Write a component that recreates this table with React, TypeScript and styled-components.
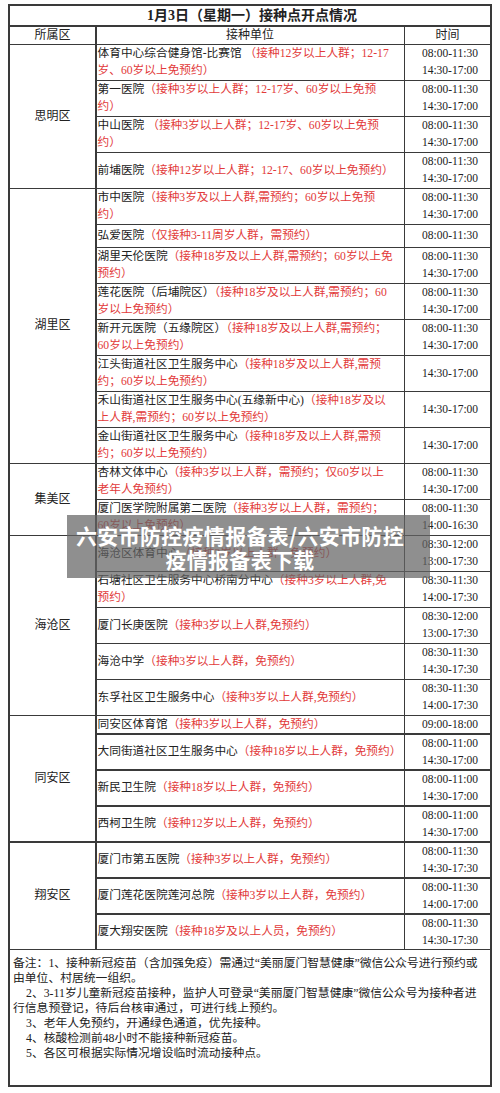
import React from "react";
import styled, { createGlobalStyle } from "styled-components";

const GlobalStyle = createGlobalStyle`
  html, body {
    margin: 0;
    padding: 0;
    background: #fff;
  }
  body {
    font-family: "Liberation Serif", "Noto Sans CJK SC", serif;
    color: #222;
  }
`;

// line breaks inside names/notes follow the printed sheet
type Site = { name: string; note: string; times: string[]; h?: number };
type District = { name: string; sites: Site[] };

const AM_PM = ["08:00-11:30", "14:30-17:00"];

const districts: District[] = [
  {
    name: "思明区",
    sites: [
      { name: "体育中心综合健身馆-比赛馆 ", note: "（接种12岁以上人群；12-17\n岁、60岁以上免预约）", times: AM_PM },
      { name: "第一医院", note: "（接种3岁以上人群；12-17岁、60岁以上免预\n约）", times: AM_PM },
      { name: "中山医院 ", note: "（接种3岁以上人群；12-17岁、60岁以上免预\n约）", times: AM_PM },
      { name: "前埔医院", note: "（接种12岁以上人群；12-17、60岁以上免预约）", times: AM_PM },
    ],
  },
  {
    name: "湖里区",
    sites: [
      { name: "市中医院", note: "（接种3岁及以上人群,需预约；60岁以上免预\n约）", times: AM_PM },
      { name: "弘爱医院", note: "（仅接种3-11周岁人群，需预约）", times: ["08:00-11:30"], h: 23 },
      { name: "湖里天伦医院", note: "（接种18岁及以上人群,需预约；60岁以上免\n预约）", times: AM_PM },
      { name: "莲花医院（后埔院区）", note: "（接种18岁及以上人群,需预约；60\n岁以上免预约）", times: AM_PM },
      { name: "新开元医院（五缘院区）", note: "（接种18岁及以上人群,需预约；\n60岁以上免预约）", times: AM_PM },
      { name: "江头街道社区卫生服务中心", note: "（接种18岁及以上人群,需预\n约；60岁以上免预约）", times: ["14:30-17:00"] },
      { name: "禾山街道社区卫生服务中心(五缘新中心)", note: "（接种18岁及以\n上人群,需预约；60岁以上免预约）", times: ["14:30-17:00"] },
      { name: "金山街道社区卫生服务中心", note: "（接种18岁及以上人群,需预\n约；60岁以上免预约）", times: ["14:30-17:00"] },
    ],
  },
  {
    name: "集美区",
    sites: [
      { name: "杏林文体中心", note: "（接种3岁以上人群，需预约；仅60岁以上\n老年人免预约）", times: AM_PM },
      { name: "厦门医学院附属第二医院", note: "（接种3岁以上人群，需预约；\n60岁以上免预约）", times: ["08:00-11:30", "14:00-16:30"] },
    ],
  },
  {
    name: "海沧区",
    sites: [
      { name: "海沧区体育中心", note: "（接种3岁以上人群，免预约）", times: ["08:30-12:00", "13:00-17:30"] },
      { name: "石塘社区卫生服务中心桥南分中心", note: "（接种3岁以上人群,免\n预约）", times: ["08:30-11:30", "14:00-17:30"] },
      { name: "厦门长庚医院", note: "（接种3岁以上人群,免预约）", times: ["08:30-12:00", "13:00-17:30"] },
      { name: "海沧中学", note: "（接种3岁以上人群，免预约）", times: ["08:30-11:30", "14:30-17:30"] },
      { name: "东孚社区卫生服务中心", note: "（接种3岁以上人群,免预约）", times: ["08:30-11:30", "14:00-17:30"] },
    ],
  },
  {
    name: "同安区",
    sites: [
      { name: "同安区体育馆", note: "（接种3岁以上人群，免预约）", times: ["09:00-18:00"], h: 18 },
      { name: "大同街道社区卫生服务中心", note: "（接种18岁以上人群，免预约）", times: ["08:00-11:00", "14:30-17:00"] },
      { name: "新民卫生院", note: "（接种18岁以上人群，免预约）", times: ["08:00-11:00", "14:30-17:00"] },
      { name: "西柯卫生院", note: "（接种12岁以上人群，免预约）", times: ["08:00-11:00", "14:30-17:00"] },
    ],
  },
  {
    name: "翔安区",
    sites: [
      { name: "厦门市第五医院", note: "（接种3岁以上人群，免预约）", times: ["08:00-11:30", "14:30-17:30"] },
      { name: "厦门莲花医院莲河总院", note: "（接种3岁以上人群，免预约）", times: ["08:00-11:30", "14:00-17:00"] },
      { name: "厦大翔安医院", note: "（接种18岁及以上人员，免预约）", times: ["08:00-11:30", "14:30-17:30"] },
    ],
  },
];

const notes = [
  "备注：1、接种新冠疫苗（含加强免疫）需通过“美丽厦门智慧健康”微信公众号进行预约或由单位、村居统一组织。",
  "2、3-11岁儿童新冠疫苗接种，监护人可登录“美丽厦门智慧健康”微信公众号为接种者进行信息预登记，待后台核审通过，可进行线上预约。",
  "3、老年人免预约，开通绿色通道，优先接种。",
  "4、核酸检测前48小时不能接种新冠疫苗。",
  "5、各区可根据实际情况增设临时流动接种点。",
];

function App() {
  return (
    <Page>
      <GlobalStyle />
      <Sheet>
        <Grid>
          <TitleCell>1月3日（星期一）接种点开点情况</TitleCell>
          <HeadCell $col={1}>所属区</HeadCell>
          <HeadCell $col={2}>接种单位</HeadCell>
          <HeadCell $col={3}>时间</HeadCell>
          {districts.map((d) => (
            <React.Fragment key={d.name}>
              <DistrictCell $span={d.sites.length}>{d.name}</DistrictCell>
              {d.sites.map((s) => (
                <React.Fragment key={s.name}>
                  <UnitCell $h={s.h ?? 36}>
                    <UnitText>
                      {s.name}
                      <Red>{s.note}</Red>
                    </UnitText>
                  </UnitCell>
                  <TimeCell>
                    {s.times.map((t) => (
                      <div key={t}>{t}</div>
                    ))}
                  </TimeCell>
                </React.Fragment>
              ))}
            </React.Fragment>
          ))}
        </Grid>
        <Notes>
          {notes.map((n, i) => (
            <NoteLine key={i} $indent={i > 0}>
              {n}
            </NoteLine>
          ))}
        </Notes>
        <Overlay>
          六安市防控疫情报备表/六安市防控
          <br />
          疫情报备表下载
        </Overlay>
      </Sheet>
    </Page>
  );
}

const LINE = "#3a3a3a";

const Page = styled.div`
  padding: 4px 8px 6px;
`;

const Sheet = styled.div`
  position: relative;
  width: 484px;
  box-sizing: border-box;
  border: 2px solid ${LINE};
`;

const Grid = styled.div`
  display: grid;
  grid-template-columns: 85px 307px 85px;
  gap: 1.5px;
  background: ${LINE};
  font-size: 12px;
  line-height: 17px;
`;

const Cell = styled.div`
  background: #fff;
  display: flex;
  align-items: center;
`;

const TitleCell = styled(Cell)`
  grid-column: 1 / span 3;
  height: 19px;
  justify-content: center;
  font-size: 14px;
  font-weight: 700;
  padding-left: 4px;
`;

const HeadCell = styled(Cell)<{ $col: number }>`
  grid-column: ${(p) => p.$col};
  height: 17px;
  justify-content: center;
  font-size: 12px;
`;

const DistrictCell = styled(Cell)<{ $span: number }>`
  grid-column: 1;
  grid-row: span ${(p) => p.$span};
  justify-content: center;
  font-size: 12px;
`;

const UnitCell = styled(Cell)<{ $h: number }>`
  grid-column: 2;
  min-height: ${(p) => p.$h - 1.5}px;
  padding: 0 0 0 1px;
  box-sizing: border-box;
`;

const UnitText = styled.div`
  flex: 1;
  min-width: 0;
  font-size: 11.7px;
  white-space: pre;
`;

const Red = styled.span`
  color: #e23a3a;
`;

const TimeCell = styled(Cell)`
  grid-column: 3;
  flex-direction: column;
  justify-content: center;
  text-align: center;
  font-size: 11.5px;
  padding-left: 5px;
`;

const Notes = styled.div`
  border-top: 1.5px solid ${LINE};
  padding: 6px 2px 24px 3px;
  font-size: 11.8px;
  line-height: 15px;
`;

const NoteLine = styled.p<{ $indent: boolean }>`
  margin: 0;
  text-indent: ${(p) => (p.$indent ? "13px" : "0")};
`;

const Overlay = styled.div`
  position: absolute;
  left: 57px;
  top: 509px;
  width: 363px;
  height: 63px;
  box-sizing: border-box;
  padding-right: 17px;
  display: flex;
  align-items: center;
  justify-content: center;
  text-align: center;
  background: rgba(100, 100, 100, 0.72);
  color: #fff;
  font-family: "Noto Sans CJK SC", "Noto Sans", sans-serif;
  font-weight: 700;
  font-size: 21px;
  line-height: 24px;
  letter-spacing: 0.3px;
`;

export default App;
